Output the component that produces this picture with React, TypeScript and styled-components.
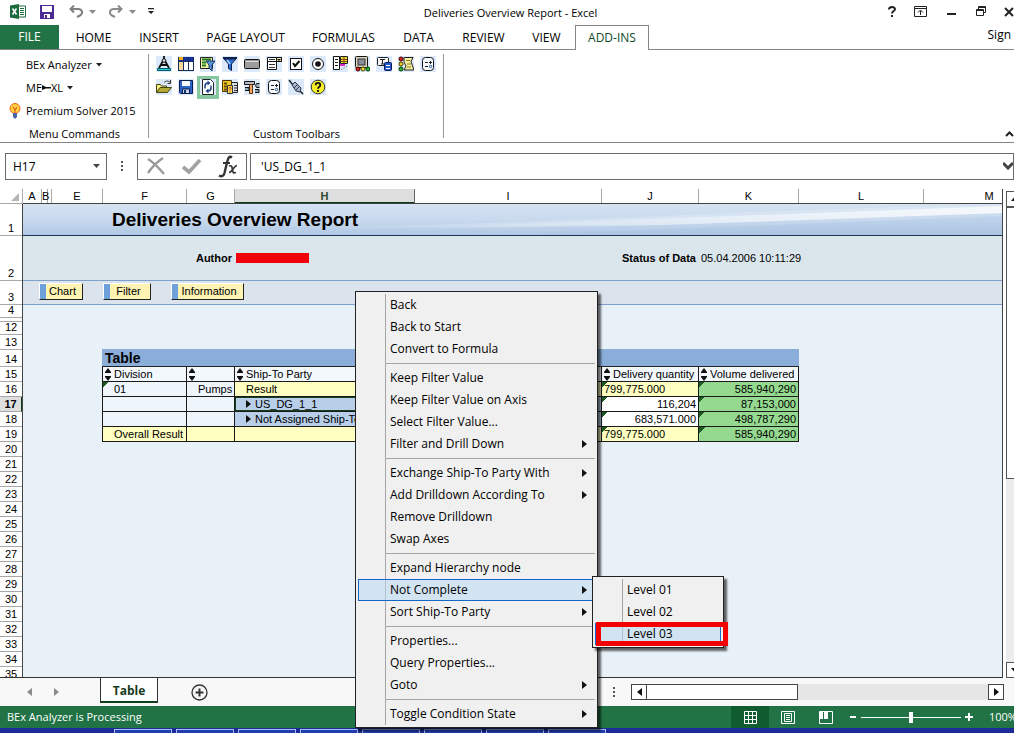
import React from 'react';
import styled, { createGlobalStyle, css } from 'styled-components';

const UI = `"Open Sans", "Noto Sans", sans-serif`;
const SHEET = `"Liberation Sans", Arial, sans-serif`;

const Global = createGlobalStyle`
  * { box-sizing: border-box; }
  html, body { margin: 0; height: 100%; overflow: hidden; background: #fff; }
  button { font: inherit; color: inherit; background: none; border: 0; padding: 0; margin: 0; text-align: left; }
  ul { list-style: none; margin: 0; padding: 0; }
  svg { display: block; flex: none; }
`;

const Page = styled.div`
  position: relative;
  display: flex;
  flex-direction: column;
  height: 100vh;
  overflow: hidden;
  background: #fff;
  color: #000;
  font: 12px/16px ${UI};
`;

/* ---------- title bar ---------- */

const TitleBar = styled.header`
  flex: none;
  display: grid;
  grid-template-columns: 1fr auto 1fr;
  height: 25px;
`;

const QuickAccess = styled.div`
  display: flex;
  align-items: center;
  height: 23px;
  padding-left: 10px;
`;

const QuickButton = styled.button<{ $w: number }>`
  flex: none;
  width: ${(p) => p.$w}px;
`;

const Title = styled.h1`
  margin: 0;
  padding-top: 5px;
  padding-left: 7px;
  font-size: 11px;
  line-height: 16px;
  font-weight: 400;
`;

const WindowButtons = styled.div`
  display: flex;
  justify-content: flex-end;
  align-items: center;
  height: 23px;
  gap: 16px;
  overflow: hidden;
`;

/* ---------- ribbon ---------- */

const TabBar = styled.nav`
  flex: none;
  display: flex;
  height: 25px;
  border-bottom: 1px solid #858585;
  font-size: 12px;
`;

const FileTab = styled.button`
  width: 59px;
  margin-right: 2px;
  background: #217346;
  color: #fff;
  text-align: center;
`;

const Tab = styled.button<{ $w: number; $active?: boolean }>`
  flex: none;
  width: ${(p) => p.$w}px;
  padding-top: 2px;
  text-align: center;
  white-space: nowrap;
  ${(p) =>
    p.$active &&
    css`
      height: 25px;
      padding-top: 0;
      background: #fff;
      border: 1px solid #858585;
      border-bottom: 0;
      color: #0f4a28;
    `}
`;

const SignIn = styled.button`
  margin-left: auto;
  padding-right: 3px;
  height: 20px;
`;

const Ribbon = styled.section`
  flex: none;
  display: flex;
  height: 93px;
  padding-top: 3px;
  border-bottom: 1px solid #858585;
  font-size: 11px;
`;

const Group = styled.div<{ $w: number }>`
  display: flex;
  flex-direction: column;
  width: ${(p) => p.$w}px;
  height: 89px;
  background: linear-gradient(#9a9a9a, #9a9a9a) right 1px / 1px 84px no-repeat;
`;

const GroupLabel = styled.div`
  margin-top: auto;
  line-height: 16px;
  text-align: center;
`;

const Command = styled.button`
  flex: none;
  display: flex;
  align-items: center;
  height: 23px;
  padding-left: 9px;
  gap: 4px;
  white-space: nowrap;
`;

const CommandIcon = styled.span`
  width: 13px;
`;

const Linked = styled.span`
  display: flex;
  align-items: center;
`;

const IconRow = styled.div`
  flex: none;
  display: flex;
  height: 23px;
  padding-left: 4px;
`;

const ToolButton = styled.button<{ $on?: boolean }>`
  display: flex;
  align-items: flex-start;
  justify-content: center;
  width: 22px;
  height: 23px;
  padding-top: 3px;
  background: ${(p) => (p.$on ? '#86c7a0' : 'transparent')};
`;

const Collapse = styled.button`
  margin: auto 0 5px auto;
`;

/* ---------- formula bar ---------- */

const FormulaBar = styled.section`
  flex: none;
  display: flex;
  align-items: center;
  height: 46px;
  padding: 0 0 0 5px;
`;

const Box = styled.div<{ $w?: number }>`
  display: flex;
  align-items: center;
  flex: ${(p) => (p.$w ? 'none' : '1')};
  width: ${(p) => (p.$w ? `${p.$w}px` : 'auto')};
  height: 27px;
  border: 1px solid #6a6a6a;
`;

const TextField = styled.input`
  flex: 1;
  min-width: 0;
  height: 23px;
  padding: 0 0 0 7px;
  border: 0;
  outline: 0;
  background: transparent;
  color: #000;
  font: 12px/16px ${UI};
`;

const Dots = styled.span<{ $gap: number }>`
  display: flex;
  justify-content: center;
  width: ${(p) => p.$gap}px;
`;

const FormulaButtons = styled(Box)`
  padding: 0 8px 0 9px;
  justify-content: space-between;
  margin-right: 3px;
`;

/* ---------- worksheet ---------- */

const Work = styled.main`
  flex: 1;
  min-height: 0;
  display: flex;
`;

const SheetPane = styled.div`
  flex: 1;
  min-width: 0;
  display: grid;
  grid-template-columns: 23px 1fr;
  grid-template-rows: 15px minmax(0, 1fr);
  border-right: 1px solid #444;
  border-bottom: 1px solid #333;
  font: 11px/13px ${SHEET};
`;

const Corner = styled.div`
  display: flex;
  justify-content: flex-end;
  align-items: flex-end;
  padding: 0 3px 2px 0;
  border-bottom: 1px solid #aaa;
  border-right: 1px solid #aaa;
`;

const ColumnHeads = styled.div`
  display: flex;
  overflow: hidden;
  border-bottom: 1px solid #444;
`;

const ColumnHead = styled.div<{ $w: number; $on?: boolean }>`
  flex: none;
  width: ${(p) => p.$w}px;
  border-right: 1px solid #a8a8a8;
  text-align: center;
  line-height: 14px;
  ${(p) =>
    p.$on &&
    css`
      background: #dedede;
      border-right-color: #666;
      box-shadow: inset 0 -1px #0c3d17;
      font-weight: 700;
      color: #2d4a2d;
    `}
`;

const RowHeads = styled.div`
  overflow: hidden;
  border-right: 1px solid #444;
`;

const RowHead = styled.div<{ $h: number; $on?: boolean }>`
  display: flex;
  align-items: flex-end;
  justify-content: center;
  height: ${(p) => p.$h}px;
  border-bottom: 1px solid #a8a8a8;
  overflow: hidden;
  ${(p) =>
    p.$on &&
    css`
      background: #dedede;
      font-weight: 700;
      border-right: 1px solid #0c3d17;
    `}
`;

const Canvas = styled.div`
  overflow: hidden;
  background: #e8f0f8;
`;

const Banner = styled.div`
  display: grid;
  height: 32px;
  border-bottom: 1px solid #1d3354;
  background: #c5d7ec;
  overflow: hidden;
`;

const BannerArt = styled.svg`
  grid-area: 1 / 1;
  width: 100%;
  height: 31px;
`;

const BannerTitle = styled.h2`
  grid-area: 1 / 1;
  margin: 0;
  padding-left: 89px;
  font-size: 19px;
  line-height: 31px;
  color: #000;
`;

const InfoRow = styled.div`
  display: grid;
  grid-template-columns: 209px 461px 1fr;
  column-gap: 4px;
  align-items: center;
  height: 45px;
  border-bottom: 1px solid #7f9fcb;
  background: #dbe6ec;
  line-height: 14px;
  & > strong { text-align: right; }
`;

const InfoMiddle = styled.div`
  display: flex;
  justify-content: space-between;
  align-items: center;
  padding-right: 1px;
`;

const Redacted = styled.span`
  width: 73px;
  height: 10px;
  background: #f00008;
`;

const ButtonRow = styled.div`
  display: flex;
  gap: 20px;
  height: 24px;
  padding: 2px 0 0 16px;
  border-bottom: 1px solid #7f9fcb;
  background: #dbe4ec;
`;

const SheetButton = styled.button<{ $w: number }>`
  width: ${(p) => p.$w}px;
  height: 17px;
  padding-left: 3px;
  text-align: center;
  border: 1px solid #fff;
  border-right-color: #222;
  border-bottom-color: #222;
  background: linear-gradient(90deg, #6ea0dc 6px, #fdf4b4 6px);
`;

const Table = styled.table`
  table-layout: fixed;
  width: 697px;
  margin: 44px 0 0 79px;
  border-spacing: 0;
  line-height: 13px;
  white-space: nowrap;
`;

const TableTitle = styled.th`
  height: 18px;
  padding: 0 0 0 3px;
  border-bottom: 1px solid #222;
  background: #8aadd9;
  text-align: left;
  font-size: 14px;
  line-height: 16px;
`;

const cell = css`
  height: 15px;
  padding: 0 2px 0 11px;
  border-right: 1px solid #1a1a1a;
  border-bottom: 1px solid #1a1a1a;
  text-align: left;
  font-weight: 400;
  overflow: hidden;
  &:first-child { border-left: 1px solid #1a1a1a; }
`;

const HeadCell = styled.th`
  ${cell}
  padding-left: 2px;
  background: #f3f8fd;
`;

const HeadInner = styled.span`
  display: flex;
  align-items: center;
  gap: 3px;
  height: 14px;
`;

type Tone = 'plain' | 'white' | 'sum' | 'blue' | 'green';
const tones: Record<Tone, string> = {
  plain: '#eef5fb',
  white: '#ffffff',
  sum: '#ffffc2',
  blue: '#b8cee9',
  green: '#94d98f',
};

const Cell = styled.td<{ $tone: Tone; $mark?: boolean; $right?: boolean; $pad?: number; $on?: boolean }>`
  ${cell}
  background: ${(p) =>
    (p.$mark ? 'linear-gradient(135deg, #1c5a22 50%, transparent 50%) 0 0 / 6px 6px no-repeat, ' : '') +
    tones[p.$tone]};
  text-align: ${(p) => (p.$right ? 'right' : 'left')};
  ${(p) => p.$pad !== undefined && `padding-left: ${p.$pad}px;`}
  ${(p) => p.$on && 'box-shadow: inset 0 0 0 1px #12401a;'}
`;

const TreeItem = styled.span`
  display: flex;
  align-items: center;
  gap: 4px;
`;

const VScroll = styled.div`
  flex: none;
  display: flex;
  flex-direction: column;
  width: 8px;
  margin: 2px 0 0 3px;
  overflow: hidden;
  background: #ececec;
`;

const VButton = styled.button`
  flex: none;
  display: flex;
  align-items: center;
  justify-content: center;
  width: 16px;
  height: 16px;
  border: 1px solid #555;
  background: #fff;
`;

const VThumb = styled.div`
  width: 16px;
  height: 272px;
  margin-bottom: auto;
  border: 1px solid #555;
  background: #fff;
`;

/* ---------- sheet tabs ---------- */

const SheetBar = styled.section`
  flex: none;
  display: flex;
  height: 28px;
  background: #f8f8f8;
`;

const SheetNav = styled.div`
  display: flex;
  align-items: center;
  justify-content: center;
  gap: 22px;
  width: 86px;
  margin-right: 14px;
  padding-bottom: 1px;
`;

const SheetTab = styled.button`
  width: 58px;
  height: 25px;
  padding-top: 2px;
  margin-right: 33px;
  border: 1px solid #333;
  border-top: 0;
  border-bottom: 2px solid #10401c;
  background: #fff;
  text-align: center;
  font-weight: 700;
  color: #163a1b;
`;

const ScrollZone = styled.div`
  display: flex;
  align-items: center;
  width: 417px;
  margin-left: auto;
  padding-right: 10px;
`;

const HScroll = styled.div`
  flex: 1;
  display: flex;
  height: 16px;
  background: #e6e6e6;
`;

const HButton = styled.button`
  display: flex;
  align-items: center;
  justify-content: center;
  width: 16px;
  border: 1px solid #444;
  background: #fff;
`;

const HThumb = styled.div`
  width: 151px;
  margin-right: auto;
  border: 1px solid #444;
  border-left: 0;
  background: #fff;
`;

/* ---------- status bar ---------- */

const StatusBar = styled.footer`
  flex: none;
  display: flex;
  align-items: center;
  height: 22px;
  padding-left: 7px;
  background: #217346;
  color: #fff;
  font-size: 11px;
  overflow: hidden;
`;

const ViewButton = styled.button<{ $on?: boolean }>`
  flex: none;
  display: flex;
  align-items: center;
  justify-content: center;
  width: 38px;
  height: 22px;
  background: ${(p) => (p.$on ? '#0e5c30' : 'transparent')};
`;

const Views = styled.div`
  display: flex;
  margin-left: auto;
`;

const Zoom = styled.div`
  display: flex;
  align-items: center;
  gap: 4px;
  width: 169px;
  padding-left: 5px;
`;

const ZoomSlider = styled.input`
  appearance: none;
  width: 100px;
  height: 12px;
  margin: 0;
  background: linear-gradient(#fff, #fff) center / 100% 1px no-repeat;
  &::-webkit-slider-thumb {
    appearance: none;
    width: 4px;
    height: 11px;
    background: #fff;
  }
`;

const ZoomValue = styled.span`
  margin-left: 12px;
`;

const TaskBar = styled.div`
  flex: none;
  display: flex;
  gap: 4px;
  height: 5px;
  padding: 1px 0 0 114px;
  background: #1b2c9a;
`;

const TaskItem = styled.span`
  width: 58px;
  height: 4px;
  border: 1px solid #a9bdf0;
  border-bottom: 0;
  background: #1f3dae;
`;

/* ---------- context menus ---------- */

const menuBox = css`
  position: absolute;
  padding: 2px;
  border: 1px solid #222;
  background: linear-gradient(90deg, transparent 27px, #a5a5a5 27px, #a5a5a5 28px, transparent 28px) 2px 2px / auto
    calc(100% - 4px) no-repeat #f0f0f0;
  box-shadow: 3px 3px 2px rgba(0, 0, 0, 0.6);
`;

const Menu = styled.ul`
  ${menuBox}
  left: 355px;
  top: 291px;
  width: 243px;
`;

const SubMenu = styled.ul`
  ${menuBox}
  left: 592px;
  top: 576px;
  width: 132px;
`;

const MenuItem = styled.button<{ $on?: boolean }>`
  display: flex;
  align-items: center;
  justify-content: space-between;
  width: 100%;
  height: 22px;
  padding: 0 8px 0 32px;
  white-space: nowrap;
  ${(p) =>
    p.$on &&
    css`
      background: rgba(186, 217, 244, 0.55);
      box-shadow: inset 0 0 0 1px #1668c8;
    `}
`;

const Separator = styled.li`
  height: 7px;
  margin-left: 28px;
  border-top: 3px solid transparent;
  background: linear-gradient(#a5a5a5, #a5a5a5) 0 0 / 100% 1px no-repeat;
`;

const Highlight = styled.div`
  position: absolute;
  left: 596px;
  top: 622px;
  width: 132px;
  height: 24px;
  border: 5px solid #f40000;
`;

/* ---------- small glyphs ---------- */

type Dir = 'up' | 'down' | 'left' | 'right';
const triangles: Record<Dir, [number, number, string]> = {
  up: [7, 4, '0,4 3.5,0 7,4'],
  down: [7, 4, '0,0 7,0 3.5,4'],
  left: [5, 8, '5,0 5,8 0,4'],
  right: [5, 8, '0,0 0,8 5,4'],
};

const Triangle = ({ dir, color = '#111' }: { dir: Dir; color?: string }) => {
  const [w, h, pts] = triangles[dir];
  return (
    <svg width={w} height={h} viewBox={`0 0 ${w} ${h}`}>
      <polygon points={pts} fill={color} />
    </svg>
  );
};

const Caret = () => (
  <svg width="6" height="4" viewBox="0 0 6 4">
    <path d="M0 0h6L3 3.500z" fill="#222" />
  </svg>
);

const ThreeDots = () => (
  <svg width="2" height="11" viewBox="0 0 2 11">
    <path d="M0 0h2v2H0zM0 4h2v2H0zM0 8h2v2H0z" fill="#555" />
  </svg>
);

const SortMark = () => (
  <svg width="6" height="13" viewBox="0 0 6 13">
    <path d="M3 0L6 4v1H0V4zM0 8h6v1L3 13 0 9z" fill="#111" />
  </svg>
);

const ToolIcon = ({ children }: { children: React.ReactNode }) => (
  <svg width="16" height="16" viewBox="0 0 16 16" fill="none">
    <rect width="16" height="16" fill="#dce9fa" />
    {children}
  </svg>
);

const options = (
  <>
    <rect x="2.5" y="1.5" width="11" height="13" rx="3" fill="#f6faff" stroke="#111" />
    <path d="M5 6.500h3M5 10.500h3M9 6.500h3M10.500 5v3" stroke="#222" />
    <circle cx="10.500" cy="10.500" r="1.200" stroke="#24508c" />
  </>
);

const firstRow: [string, React.ReactNode][] = [
  ['Design mode', <><path d="M8 0v3M7.500 4L3 12M8.500 4l4.500 8M5 9h6" stroke="#111" strokeWidth="1.800" /><circle cx="8" cy="4.500" r="1.800" fill="#ddd" stroke="#111" /><path d="M1.500 12.500h13v2h-13z" fill="#1fd0dc" stroke="#075a66" /></>],
  ['Insert table', <><rect x="1" y="1" width="15" height="14" fill="#fff" /><path d="M0 1h16v4H0z" fill="#16329c" /><path d="M0 5h5v10H0z" fill="#f6d89a" /><path d="M0 2.500h5" stroke="#f6b020" strokeWidth="3" /><path d="M.5 1v14M5.500 1v14M10.500 1v14M15.500 1v14M0 14.500h16M0 5.500h16" stroke="#1b2c60" /></>],
  ['Navigation pane', <><path d="M.5 1.500h12v11H.5z" fill="#f8f4a0" stroke="#222" /><path d="M2 3.500h9M2 6.500h4M2 9.500h4" stroke="#1a7a2a" strokeWidth="2" /><path d="M6 5h9l-3 4v6l-3-3V9z" fill="#5a94d8" stroke="#1a3a66" /></>],
  ['Insert filter', <><path d="M2 3h12L9.500 8v6.500l-3-2V8z" fill="#2b6fd6" stroke="#10204a" /><path d="M1 2h14" stroke="#10204a" strokeWidth="2" /><path d="M5 4l3 4" stroke="#a9d0ff" strokeWidth="1.500" /></>],
  ['Insert button', <><rect x=".5" y="3.500" width="15" height="9" rx="1" fill="#9c9c9c" stroke="#111" /><path d="M2 5.500h12" stroke="#d8d8d8" /></>],
  ['Drop-down box', <><path d="M1.500 1.500h14v4h-14zM1.500 5.500h9v8h-9z" fill="#fff" stroke="#111" /><path d="M3 3.500h6M3 8.500h6M3 11.500h6" stroke="#333" /><path d="M10.500 1.500h5v4h-5z" fill="#f0e6a0" stroke="#111" /><path d="M11 3h4l-2 2z" fill="#111" /></>],
  ['Check box group', <><rect x="2.500" y="2.500" width="11" height="11" fill="#fff" stroke="#111" /><path d="M5 7l2 3 4.500-5" stroke="#111" strokeWidth="2" /></>],
  ['Radio button group', <><circle cx="8" cy="8" r="5.500" fill="#fff" stroke="#111" /><circle cx="8" cy="8" r="2.800" fill="#111" /></>],
  ['Conditions list', <><path d="M1.500.500h6v13h-6z" fill="#fff" stroke="#111" /><path d="M3 3.500h3M3 6.500h3M3 9.500h3" stroke="#222" /><path d="M8.500.500h7v7h-7z" fill="#f6d840" stroke="#222" /><path d="M9 3.500h6M9 5.500h6M12 1v6" stroke="#7a4b10" /><path d="M8 9h5" stroke="#e028c8" strokeWidth="2" /><path d="M9 14l6-4" stroke="#777" strokeDasharray="1 1" /></>],
  ['Exceptions list', <><rect x="1.500" y=".5" width="12" height="11" rx="1" fill="#ddd6c0" stroke="#111" /><rect x="4" y="3" width="7" height="6" fill="#88909c" stroke="#333" /><circle cx="4" cy="13" r="2" fill="#e02020" stroke="#400" /><circle cx="9" cy="13" r="2" fill="#f2e030" stroke="#440" /><circle cx="14" cy="13" r="2" fill="#28b040" stroke="#040" /></>],
  ['Insert text', <><rect x="1.500" y="1.500" width="11" height="8" rx="1" fill="#f4f4f4" stroke="#222" /><path d="M4 3.500h5M6.500 4v4M5 8h3" stroke="#222" /><rect x="8.500" y="6.500" width="7" height="8" rx="1" fill="#2458c8" stroke="#0c1c60" /><path d="M10 9.500h4M10 12.500h4" stroke="#fff" /></>],
  ['Messages', <><path d="M6 1.500h9l-2 4 3 8.500H6l2-4-2-4z" fill="#f6f0a0" stroke="#222" /><path d="M8 4.500h4M9 8h4M9 11h4" stroke="#8a7a18" /><circle cx="3" cy="3" r="2" fill="#e02020" stroke="#400" /><circle cx="3" cy="8" r="2" fill="#f2d020" stroke="#440" /><circle cx="3" cy="13" r="2" fill="#28b040" stroke="#040" /></>],
  ['Workbook settings', options],
];

const secondRow: [string, React.ReactNode][] = [
  ['Open', <><path d="M.5 13.500V5.500h4l1 1.500h5v3" fill="#f6ee80" stroke="#4a4410" /><path d="M.5 13.500L4 8.500h11.500l-4 5z" fill="#b4aa38" stroke="#4a4410" /><path d="M8 3.500c2-2 5-2 6.500.5M14.500 1v3.500h-3" stroke="#333" /></>],
  ['Save', <><path d="M1.500 1.500h13v13h-12l-1-1z" fill="#2c64c4" stroke="#0c1c50" /><path d="M4 2h8v5H4z" fill="#f4f8ff" /><path d="M4.500 10h7v4.500h-7z" fill="#ccd8ec" stroke="#0c1c50" /><path d="M6 11h2v3H6z" fill="#18346c" /></>],
  ['Refresh', <><path d="M2.500.500h8l3 3v12h-11z" fill="#fff" stroke="#222" /><path d="M5 9.500V7a3 3 0 013-3M11 6.500V9a3 3 0 01-3 3" stroke="#1d3f80" strokeWidth="1.500" /><path d="M7.500 1.500v5l3-2.500zM8.500 9.500v5l-3-2.500z" fill="#1d3f80" /></>],
  ['Change variables', <><path d="M5.500 3.500h10v10h-10z" fill="#d8dde4" stroke="#222" /><path d="M12 6.500h3M12 9h3M12 11.500h3" stroke="#333" /><path d="M.5 1.500h9v11H.5z" fill="#f0c820" stroke="#4a3408" /><path d="M2 4.500h3M2 7.500h3M2 10.500h3" stroke="#6a4a08" strokeWidth="2" /><path d="M5.500 6.500h5v8h-5z" fill="#f6e050" stroke="#333" /><path d="M7 9.500c0-1.500 2-1.500 2 0l-1 1v1M8 12.500v1" stroke="#c01010" /></>],
  ['Tools', <><path d="M.5 2.500h10v3H.5z" fill="#b8bcc4" stroke="#111" /><path d="M5.500 5.500h3v9h-3z" fill="#f0a860" stroke="#5a3010" /><path d="M1 8.500h4v3H1M15.500 4.500h-3l-1 2 1 2h3M11 10.500h4v3h-4" fill="#8fa8b8" stroke="#111" /></>],
  ['Global settings', options],
  ['Disconnect', <><path d="M1 1l4 5M11 11l4 4" stroke="#222" strokeWidth="1.500" /><path d="M4 6l3-3 6 6-1 4-4-1z" fill="#a9b6cc" stroke="#2a3448" /><path d="M6 9l4-4M8 11l4-4" stroke="#2a3448" /></>],
  ['Help', <><circle cx="8" cy="8" r="6.800" fill="#f8ee28" stroke="#333" /><path d="M5.700 6.200c0-3 4.600-3 4.600 0 0 1.600-2.300 1.600-2.300 3.500M8 11v2" stroke="#111" strokeWidth="1.800" /></>],
];

/* ---------- data ---------- */

const tabs: [string, number][] = [
  ['HOME', 65], ['INSERT', 66], ['PAGE LAYOUT', 107], ['FORMULAS', 89],
  ['DATA', 61], ['REVIEW', 69], ['VIEW', 57], ['ADD-INS', 74],
];

const columns: [string, number][] = [
  ['A', 19], ['B', 6], ['', 4], ['E', 51], ['F', 84], ['G', 48],
  ['H', 180], ['I', 187], ['J', 97], ['K', 100], ['L', 125], ['M', 131],
];

const rowHeads: [string, number][] = [
  ['1', 32], ['2', 45], ['3', 24], ['4', 13], ['', 4], ['12', 13], ['13', 15], ['14', 17],
  ...Array.from({ length: 21 }, (_, i): [string, number] => [String(15 + i), 15]),
];

const results: { label?: string; unit?: string; party?: string; node?: string; sum: boolean; qty: string; vol: string }[] = [
  { label: '01', unit: 'Pumps', party: 'Result', sum: true, qty: '799,775.000', vol: '585,940,290' },
  { node: 'US_DG_1_1', sum: false, qty: '116,204', vol: '87,153,000' },
  { node: 'Not Assigned Ship-To Party (s)', sum: false, qty: '683,571.000', vol: '498,787,290' },
  { label: 'Overall Result', sum: true, qty: '799,775.000', vol: '585,940,290' },
];

const menu: ([string, boolean?] | null)[] = [
  ['Back'], ['Back to Start'], ['Convert to Formula'], null,
  ['Keep Filter Value'], ['Keep Filter Value on Axis'], ['Select Filter Value...'], ['Filter and Drill Down', true], null,
  ['Exchange Ship-To Party With', true], ['Add Drilldown According To', true], ['Remove Drilldown'], ['Swap Axes'], null,
  ['Expand Hierarchy node'], ['Not Complete', true], ['Sort Ship-To Party', true], null,
  ['Properties...'], ['Query Properties...'], ['Goto', true], null,
  ['Toggle Condition State', true],
];

/* ---------- sections ---------- */

const Header = () => (
  <TitleBar>
    <QuickAccess>
      <QuickButton $w={30} aria-label="Excel">
        <svg width="16" height="15" viewBox="0 0 16 15">
          <path d="M8 2h7.500v11H8z" fill="#fff" stroke="#1d6b3c" />
          <path d="M10 4.500h4M10 6.500h4M10 8.500h4M10 10.500h4" stroke="#1d6b3c" />
          <path d="M0 1.500L9 0v15l-9-1.500z" fill="#1d6b3c" />
          <path d="M2.500 4.500l4 6M6.500 4.500l-4 6" stroke="#fff" strokeWidth="1.600" />
        </svg>
      </QuickButton>
      <QuickButton $w={29} aria-label="Save">
        <svg width="14" height="14" viewBox="0 0 14 14">
          <path d="M0 0h14v14H0z" fill="#4b2a94" />
          <path d="M2 1h10v6H2zM4 9h6v4H4z" fill="#fff" />
          <path d="M5 10h2v3H5z" fill="#4b2a94" />
        </svg>
      </QuickButton>
      <QuickButton $w={20} aria-label="Undo">
        <svg width="14" height="13" viewBox="0 0 14 13" fill="none" stroke="#7f7f7f" strokeWidth="2">
          <path d="M5 0.500L1.500 4 5 7.500M1.500 4H9c5 0 5 5 2 6.500L8 12" />
        </svg>
      </QuickButton>
      <QuickButton $w={20} aria-label="Undo history"><Triangle dir="down" color="#8a8a8a" /></QuickButton>
      <QuickButton $w={20} aria-label="Redo">
        <svg width="14" height="13" viewBox="0 0 14 13" fill="none" stroke="#8a8a8a" strokeWidth="2">
          <path d="M9 .5L12.500 4 9 7.500M12.500 4H5c-5 0-5 5-2 6.500L6 12" />
        </svg>
      </QuickButton>
      <QuickButton $w={19} aria-label="Redo history"><Triangle dir="down" color="#8a8a8a" /></QuickButton>
      <QuickButton $w={8} aria-label="Customize">
        <svg width="6" height="7" viewBox="0 0 6 7"><path d="M0 0h6v1.300H0zM0 3h6L3 6z" fill="#222" /></svg>
      </QuickButton>
    </QuickAccess>
    <Title>Deliveries Overview Report - Excel</Title>
    <WindowButtons>
      <button aria-label="Help">
        <svg width="8" height="11" viewBox="0 0 8 11" fill="none" stroke="#222" strokeWidth="2">
          <path d="M1 3.500C1 .3 7 .3 7 3.200 7 5 4 5 4 7.500M4 9v2" />
        </svg>
      </button>
      <button aria-label="Ribbon display options">
        <svg width="17" height="11" viewBox="0 0 17 11" fill="none" stroke="#222">
          <path d="M2.500.5h12v10h-12zM2 2.500h13M8.500 9V5M6 6.500L8.500 4 11 6.500" />
        </svg>
      </button>
      <button aria-label="Minimize">
        <svg width="13" height="10" viewBox="0 0 13 10"><path d="M2 6h9v2H2z" fill="#222" /></svg>
      </button>
      <button aria-label="Restore">
        <svg width="14" height="11" viewBox="0 0 14 11" fill="none" stroke="#222">
          <path d="M2.500 3.500h7v6h-7zM2 4.500h8M4.500 3V.5h7v6H10M4 1.500h8" />
        </svg>
      </button>
      <button aria-label="Close">
        <svg width="10" height="10" viewBox="0 0 10 10" stroke="#222" strokeWidth="2"><path d="M1 1l8 8M9 1L1 9" /></svg>
      </button>
    </WindowButtons>
  </TitleBar>
);

const RibbonArea = () => (
  <>
    <TabBar>
      <FileTab>FILE</FileTab>
      {tabs.map(([name, w]) => (
        <Tab key={name} $w={w} $active={name === 'ADD-INS'}>{name}</Tab>
      ))}
      <SignIn>Sign</SignIn>
    </TabBar>
    <Ribbon>
      <Group $w={149}>
        <Command><CommandIcon />BEx Analyzer<Caret /></Command>
        <Command>
          <CommandIcon />
          <Linked>
            ME
            <svg width="9" height="5" viewBox="0 0 9 5"><path d="M0 0l4 2h5v1.500H4L0 5z" fill="#111" /></svg>
            XL
          </Linked>
          <Caret />
        </Command>
        <Command>
          <svg width="13" height="16" viewBox="0 0 13 16">
            <circle cx="6" cy="5.500" r="5" fill="#ffd23a" stroke="#e8641c" />
            <path d="M4 4l2 3 2-3M6 7v3" fill="none" stroke="#d8401c" />
            <path d="M4 10h4v4l-2 2-2-2z" fill="#4a62a8" />
          </svg>
          Premium Solver 2015
        </Command>
        <GroupLabel>Menu Commands</GroupLabel>
      </Group>
      <Group $w={295}>
        <IconRow>
          {firstRow.map(([name, art]) => (
            <ToolButton key={name} aria-label={name}><ToolIcon>{art}</ToolIcon></ToolButton>
          ))}
        </IconRow>
        <IconRow>
          {secondRow.map(([name, art]) => (
            <ToolButton key={name} aria-label={name} $on={name === 'Refresh'}><ToolIcon>{art}</ToolIcon></ToolButton>
          ))}
        </IconRow>
        <GroupLabel>Custom Toolbars</GroupLabel>
      </Group>
      <Collapse aria-label="Collapse ribbon">
        <svg width="9" height="6" viewBox="0 0 9 6" fill="none" stroke="#222" strokeWidth="2"><path d="M1 5l3.500-3.500L8 5" /></svg>
      </Collapse>
    </Ribbon>
  </>
);

const Formula = () => (
  <FormulaBar>
    <Box $w={102}>
      <TextField aria-label="Name box" defaultValue="H17" />
      <Dots $gap={20}><Triangle dir="down" color="#444" /></Dots>
    </Box>
    <Dots $gap={30}><ThreeDots /></Dots>
    <FormulaButtons $w={110}>
      <button aria-label="Cancel">
        <svg width="18" height="18" viewBox="0 0 18 18" fill="none" stroke="#9a9a9a" strokeWidth="2.400"><path d="M1 2c5 3 10 8 16 15M16 1C10 5 5 10 1 16" /></svg>
      </button>
      <button aria-label="Enter">
        <svg width="20" height="17" viewBox="0 0 20 17" fill="none" stroke="#a2a2a2" strokeWidth="3.600"><path d="M1 9l6 5L18 2" /></svg>
      </button>
      <button aria-label="Insert function">
        <svg width="20" height="23" viewBox="0 0 20 23" fill="none" stroke="#333" strokeWidth="2">
          <path d="M14 2.500c-3-2-4 1-5 5L6.500 18c-.8 3-3 4-5.500 2.500" strokeWidth="2.400" />
          <path d="M5 8h7" />
          <path d="M11 11c3-1 3 1 3.500 4s1 3.500 3.500 2.500M19 10.500c-3 0-5 7-8 7" strokeWidth="1.700" />
        </svg>
      </button>
    </FormulaButtons>
    <Box>
      <TextField aria-label="Formula" defaultValue=" 'US_DG_1_1" />
      <svg width="10" height="8" viewBox="0 0 10 8" fill="none" stroke="#444" strokeWidth="3"><path d="M0 1l5 5 5-5" /></svg>
    </Box>
  </FormulaBar>
);

const Results = () => (
  <Table>
    <colgroup>
      {[85, 48, 180, 187, 97, 100].map((w, i) => <col key={i} width={w} />)}
    </colgroup>
    <thead>
      <tr><TableTitle colSpan={6}>Table</TableTitle></tr>
      <tr>
        {['Division', '', 'Ship-To Party', '', 'Delivery quantity', 'Volume delivered'].map((h, i) => (
          <HeadCell key={i}><HeadInner><SortMark />{h}</HeadInner></HeadCell>
        ))}
      </tr>
    </thead>
    <tbody>
      {results.map((r, i) => {
        const mid: Tone = r.sum ? 'sum' : 'blue';
        const side: Tone = i === 3 ? 'sum' : 'plain';
        return (
          <tr key={i}>
            <Cell $tone={side} $mark={i === 0}>{r.label}</Cell>
            <Cell $tone={side} $right>{r.unit}</Cell>
            <Cell $tone={mid} $on={i === 1}>
              {r.node ? <TreeItem><Triangle dir="right" />{r.node}</TreeItem> : r.party}
            </Cell>
            <Cell $tone={mid} />
            <Cell $tone={r.sum ? 'sum' : 'white'} $mark $right={!r.sum} $pad={2}>{r.qty}</Cell>
            <Cell $tone="green" $mark $right>{r.vol}</Cell>
          </tr>
        );
      })}
    </tbody>
  </Table>
);

const Worksheet = () => (
  <Work>
    <SheetPane>
      <Corner><svg width="8" height="8" viewBox="0 0 8 8"><path d="M8 0v8H0z" fill="#b5b5b5" /></svg></Corner>
      <ColumnHeads>
        {columns.map(([name, w], i) => <ColumnHead key={i} $w={w} $on={name === 'H'}>{name}</ColumnHead>)}
      </ColumnHeads>
      <RowHeads>
        {rowHeads.map(([name, h], i) => <RowHead key={i} $h={h} $on={name === '17'}>{name}</RowHead>)}
      </RowHeads>
      <Canvas>
        <Banner>
          <BannerArt viewBox="0 0 979 31" preserveAspectRatio="none">
            <defs>
              <linearGradient id="sky" x1="0" y1="0" x2="0" y2="1">
                <stop offset="0" stopColor="#d5e3f2" />
                <stop offset=".5" stopColor="#c9daee" />
                <stop offset="1" stopColor="#b0c8e4" />
              </linearGradient>
              <linearGradient id="beam" x1="0" y1="0" x2="1" y2="0">
                <stop offset="0" stopColor="#fff" stopOpacity="0" />
                <stop offset="1" stopColor="#fff" stopOpacity=".75" />
              </linearGradient>
            </defs>
            <rect width="979" height="31" fill="url(#sky)" />
            <path d="M330 26L979 2v7L640 21z" fill="url(#beam)" />
            <path d="M300 24C500 20 760 4 979 1v8L640 21z" fill="#fff" opacity=".2" />
            <path d="M500 31L979 12v19z" fill="#9dbbe0" opacity=".25" />
          </BannerArt>
          <BannerTitle>Deliveries Overview Report</BannerTitle>
        </Banner>
        <InfoRow>
          <strong>Author</strong>
          <InfoMiddle><Redacted /><strong>Status of Data</strong></InfoMiddle>
          <span>05.04.2006 10:11:29</span>
        </InfoRow>
        <ButtonRow>
          <SheetButton $w={44}>Chart</SheetButton>
          <SheetButton $w={48}>Filter</SheetButton>
          <SheetButton $w={73}>Information</SheetButton>
        </ButtonRow>
        <Results />
      </Canvas>
    </SheetPane>
    <VScroll>
      <VButton aria-label="Scroll up"><Triangle dir="up" /></VButton>
      <VThumb />
      <VButton aria-label="Scroll down"><Triangle dir="down" /></VButton>
    </VScroll>
  </Work>
);

const Bottom = () => (
  <>
    <SheetBar>
      <SheetNav>
        <button aria-label="Previous sheet"><Triangle dir="left" color="#8a8a8a" /></button>
        <button aria-label="Next sheet"><Triangle dir="right" color="#8a8a8a" /></button>
      </SheetNav>
      <SheetTab>Table</SheetTab>
      <button aria-label="New sheet">
        <svg width="17" height="17" viewBox="0 0 17 17" fill="none" stroke="#333"><circle cx="8.500" cy="8.500" r="7.500" strokeWidth="1.300" /><path d="M8.500 4.500v8M4.500 8.500h8" strokeWidth="2" /></svg>
      </button>
      <ScrollZone>
        <Dots $gap={34}><ThreeDots /></Dots>
        <HScroll>
          <HButton aria-label="Scroll left"><Triangle dir="left" /></HButton>
          <HThumb />
          <HButton aria-label="Scroll right"><Triangle dir="right" /></HButton>
        </HScroll>
      </ScrollZone>
    </SheetBar>
    <StatusBar>
      <span>BEx Analyzer is Processing</span>
      <Views>
        <ViewButton $on aria-label="Normal view">
          <svg width="13" height="13" viewBox="0 0 13 13" fill="none" stroke="#fff"><path d="M.5.500h12v12H.5zM4.500 0v13M8.500 0v13M0 4.500h13M0 8.500h13" /></svg>
        </ViewButton>
        <ViewButton aria-label="Page layout view">
          <svg width="14" height="13" viewBox="0 0 14 13" fill="none" stroke="#fff"><path d="M.5.500h13v12H.5zM3.500 2.500h7v8h-7zM5 4.500h4M5 6.500h4M5 8.500h4" /></svg>
        </ViewButton>
        <ViewButton aria-label="Page break view">
          <svg width="14" height="13" viewBox="0 0 14 13"><path d="M.5.500h13v12H.5z" fill="none" stroke="#fff" /><path d="M1 1h3v7H1zM5 1h4v7H5z" fill="#fff" /></svg>
        </ViewButton>
      </Views>
      <Zoom>
        <button aria-label="Zoom out"><svg width="7" height="8" viewBox="0 0 7 8"><path d="M0 3h6v2H0z" fill="#fff" /></svg></button>
        <ZoomSlider type="range" aria-label="Zoom" min={0} max={100} defaultValue={50} />
        <button aria-label="Zoom in"><svg width="8" height="8" viewBox="0 0 8 8"><path d="M0 3h3V0h2v3h3v2H5v3H3V5H0z" fill="#fff" /></svg></button>
        <ZoomValue>100%</ZoomValue>
      </Zoom>
    </StatusBar>
    <TaskBar>{Array.from({ length: 8 }, (_, i) => <TaskItem key={i} />)}</TaskBar>
  </>
);

export default function App() {
  return (
    <Page>
      <Global />
      <Header />
      <RibbonArea />
      <Formula />
      <Worksheet />
      <Bottom />
      <Menu>
        {menu.map((item, i) =>
          item ? (
            <li key={i}>
              <MenuItem $on={item[0] === 'Not Complete'}>
                {item[0]}
                {item[1] && <Triangle dir="right" />}
              </MenuItem>
            </li>
          ) : (
            <Separator key={i} />
          ),
        )}
      </Menu>
      <SubMenu>
        {['Level 01', 'Level 02', 'Level 03'].map((name) => (
          <li key={name}><MenuItem $on={name === 'Level 03'}>{name}</MenuItem></li>
        ))}
      </SubMenu>
      <Highlight />
    </Page>
  );
}
